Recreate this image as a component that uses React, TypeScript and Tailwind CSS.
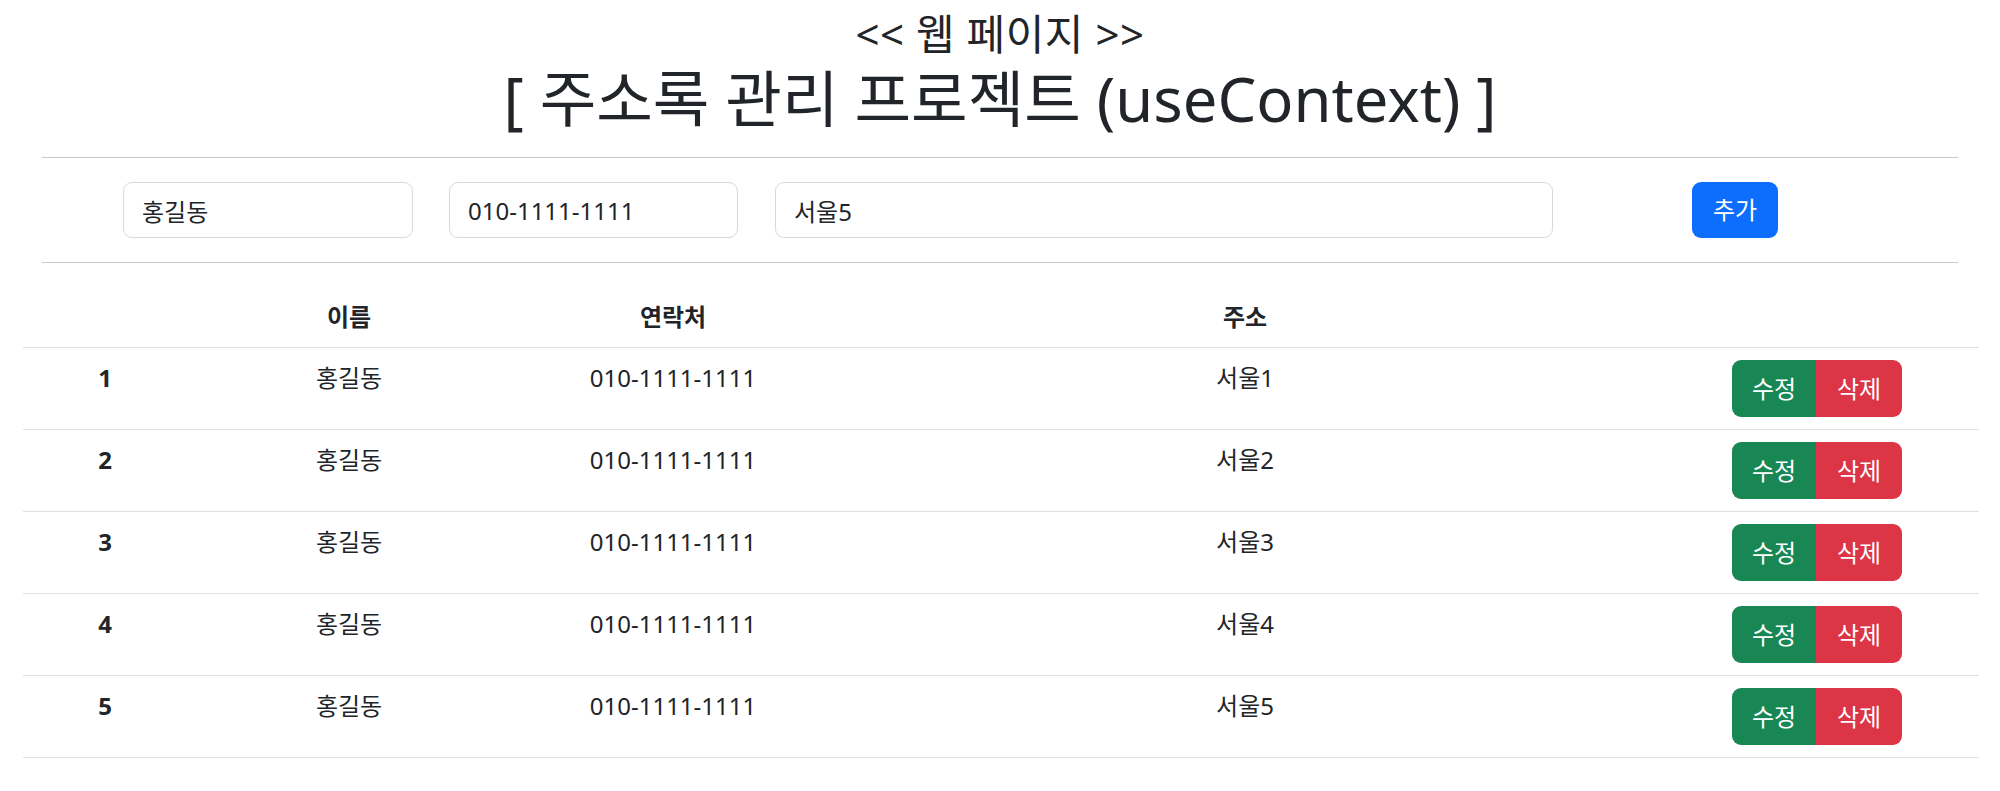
import React from "react";

interface Person {
  id: number;
  name: string;
  phone: string;
  address: string;
}

const people: Person[] = [1, 2, 3, 4, 5].map((n) => ({
  id: n,
  name: "홍길동",
  phone: "010-1111-1111",
  address: `서울${n}`,
}));

const font = {
  fontFamily: '"Noto Sans", "Noto Sans CJK KR", sans-serif',
};

export default function App() {
  return (
    <div className="min-h-[791px] bg-white text-[#212529]" style={font}>
      <div className="text-center">
        <h3 className="pt-[9px] text-[42px] leading-[50px] font-normal tracking-[0.5px]">
          &lt;&lt; 웹 페이지 &gt;&gt;
        </h3>
        <h1 className="mt-[4px] text-[61.5px] leading-[70px] font-normal">
          [ 주소록 관리 프로젝트 (useContext) ]
        </h1>
      </div>

      <div className="mx-[42px] mt-[24px] border-t-[1.5px] border-[#c8cacc]" />

      <div className="mx-[42px] flex items-center py-[24px]">
        <input
          className="ml-[81px] h-[56px] w-[290px] rounded-[9px] border-[1.5px] border-[#d6dadf] px-[18px] text-[24px] outline-none"
          defaultValue="홍길동"
        />
        <input
          className="ml-[36px] h-[56px] w-[289px] rounded-[9px] border-[1.5px] border-[#d6dadf] px-[18px] text-[24px] outline-none"
          defaultValue="010-1111-1111"
        />
        <input
          className="ml-[37px] h-[56px] w-[778px] rounded-[9px] border-[1.5px] border-[#d6dadf] px-[18px] text-[24px] outline-none"
          defaultValue="서울5"
        />
        <button className="ml-[139px] h-[56px] w-[86px] rounded-[9px] bg-[#0d6efd] text-[24px] text-white">
          추가
        </button>
      </div>

      <div className="mx-[42px] border-t-[1.5px] border-[#c8cacc]" />

      <table className="mx-[23px] mt-[24px] w-[1956px] table-fixed border-collapse text-center text-[24px] leading-[36px]">
        <colgroup>
          <col className="w-[164px]" />
          <col className="w-[324px]" />
          <col className="w-[324px]" />
          <col className="w-[820px]" />
          <col className="w-[324px]" />
        </colgroup>
        <thead>
          <tr className="border-b-[1.5px] border-[#dee2e6]">
            <th className="py-[12px]"></th>
            <th className="py-[12px] font-bold">이름</th>
            <th className="py-[12px] font-bold">연락처</th>
            <th className="py-[12px] font-bold">주소</th>
            <th className="py-[12px]"></th>
          </tr>
        </thead>
        <tbody>
          {people.map((p) => (
            <tr key={p.id} className="border-b-[1.5px] border-[#dee2e6] align-top">
              <th className="py-[12px] font-bold">{p.id}</th>
              <td className="py-[12px]">{p.name}</td>
              <td className="py-[12px]">{p.phone}</td>
              <td className="py-[12px]">{p.address}</td>
              <td className="py-[12px]">
                <div className="inline-flex h-[57px] overflow-hidden rounded-[9px] text-white">
                  <button className="w-[84px] bg-[#198754]">수정</button>
                  <button className="w-[86px] bg-[#dc3545]">삭제</button>
                </div>
              </td>
            </tr>
          ))}
        </tbody>
      </table>
    </div>
  );
}
